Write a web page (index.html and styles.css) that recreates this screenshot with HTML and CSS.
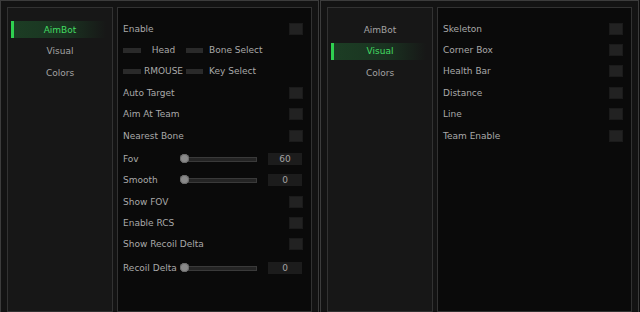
FILE: index.html
```html
<!DOCTYPE html>
<html lang="en">
<head>
    <meta charset="UTF-8">
    <title>Menu</title>
    <link rel="stylesheet" href="styles.css">
</head>
<body>
    <div class="window">
        <div class="sidebar">
            <div class="tab active">AimBot</div>
            <div class="tab">Visual</div>
            <div class="tab">Colors</div>
        </div>
        <div class="content">
            <div class="row"><span>Enable</span><div class="check"></div></div>
            <div class="row combo-row">
                <div class="bar"></div><span class="combo-label">Head</span>
                <div class="bar short"></div><span class="combo-name">Bone Select</span>
            </div>
            <div class="row combo-row">
                <div class="bar"></div><span class="combo-label">RMOUSE</span>
                <div class="bar short"></div><span class="combo-name">Key Select</span>
            </div>
            <div class="row"><span>Auto Target</span><div class="check"></div></div>
            <div class="row"><span>Aim At Team</span><div class="check"></div></div>
            <div class="row"><span>Nearest Bone</span><div class="check"></div></div>
            <div class="row slider-row">
                <span class="slider-label">Fov</span>
                <div class="track"><div class="thumb"></div></div>
                <div class="value">60</div>
            </div>
            <div class="row slider-row next">
                <span class="slider-label">Smooth</span>
                <div class="track"><div class="thumb"></div></div>
                <div class="value">0</div>
            </div>
            <div class="row"><span>Show FOV</span><div class="check"></div></div>
            <div class="row"><span>Enable RCS</span><div class="check"></div></div>
            <div class="row"><span>Show Recoil Delta</span><div class="check"></div></div>
            <div class="row slider-row">
                <span class="slider-label">Recoil Delta</span>
                <div class="track"><div class="thumb"></div></div>
                <div class="value">0</div>
            </div>
        </div>
    </div>

    <div class="window">
        <div class="sidebar">
            <div class="tab">AimBot</div>
            <div class="tab active">Visual</div>
            <div class="tab">Colors</div>
        </div>
        <div class="content">
            <div class="row"><span>Skeleton</span><div class="check"></div></div>
            <div class="row"><span>Corner Box</span><div class="check"></div></div>
            <div class="row"><span>Health Bar</span><div class="check"></div></div>
            <div class="row"><span>Distance</span><div class="check"></div></div>
            <div class="row"><span>Line</span><div class="check"></div></div>
            <div class="row"><span>Team Enable</span><div class="check"></div></div>
        </div>
    </div>
</body>
</html>
```

FILE: styles.css
```css
body {
    margin: 0;
    background: #0d0d0d;
    display: flex;
    gap: 1px;
    height: 312px;
    overflow: hidden;
    font-family: "DejaVu Sans", sans-serif;
    font-size: 9px;
    color: #a9a9a9;
}

.window {
    width: 319px;
    height: 312px;
    flex: none;
    box-sizing: border-box;
    border: 1px solid #3c3c3c;
    border-bottom: 0;
    background: #131313;
    padding: 6px 6px 0;
    display: flex;
    gap: 4px;
}

.sidebar {
    width: 106px;
    box-sizing: border-box;
    border: 1px solid #323232;
    background: #171717;
    padding-top: 13px;
    display: flex;
    flex-direction: column;
    gap: 4.5px;
}

.tab {
    height: 17px;
    margin: 0 6px 0 3px;
    display: flex;
    align-items: center;
    justify-content: center;
    padding-left: 3px;
    color: #a3a3a3;
}

.tab.active {
    color: #43dc62;
    border-left: 3px solid #2fd050;
    padding-left: 0;
    background: linear-gradient(to right, #1c3d24 0%, #1a3421 55%, rgba(26, 52, 33, 0) 100%);
}

.content {
    flex: 1;
    box-sizing: border-box;
    border: 1px solid #323232;
    background: #0a0a0a;
    padding: 10px 8px 0 5px;
}

.row {
    height: 21.4px;
    display: flex;
    align-items: center;
    justify-content: space-between;
}

.check {
    width: 14px;
    height: 12px;
    background: #222;
    border: 1px solid #1b1b1b;
    box-sizing: border-box;
}

.combo-row {
    justify-content: flex-start;
}

.bar {
    width: 18px;
    height: 5px;
    background: #2a2a2a;
}

.bar.short {
    width: 17px;
}

.combo-label {
    width: 45px;
    text-align: center;
}

.combo-name {
    margin-left: 6px;
}

.slider-row {
    height: 21px;
    margin-top: 2.5px;
    justify-content: flex-start;
}

.slider-row.next {
    margin-top: 0;
}

.slider-label {
    width: 62px;
    flex: none;
}

.track {
    position: relative;
    width: 72px;
    height: 5px;
    box-sizing: border-box;
    background: #242424;
    border: 1px solid #3a3a3a;
}

.thumb {
    position: absolute;
    left: -6px;
    top: -3.5px;
    width: 9px;
    height: 9px;
    border-radius: 50%;
    background: #8a8a8a;
    box-shadow: inset 0 0 0 1px #6a6a6a;
}

.value {
    margin-left: 11px;
    width: 34px;
    height: 12px;
    background: #1c1c1c;
    color: #a3a3a3;
    display: flex;
    align-items: center;
    justify-content: center;
}
```
